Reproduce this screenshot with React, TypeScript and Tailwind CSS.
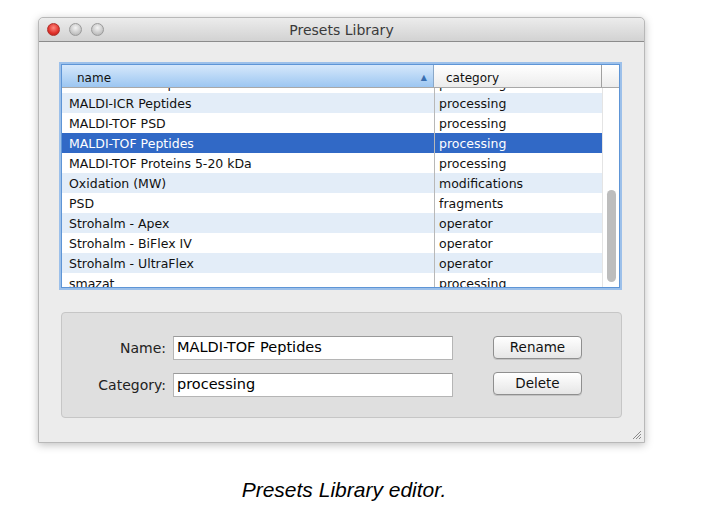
import React from "react";

type Row = { name: string; category: string };

const rows: Row[] = [
  { name: "MALDI-FTICR Peptides", category: "processing" },
  { name: "MALDI-ICR Peptides", category: "processing" },
  { name: "MALDI-TOF PSD", category: "processing" },
  { name: "MALDI-TOF Peptides", category: "processing" },
  { name: "MALDI-TOF Proteins 5-20 kDa", category: "processing" },
  { name: "Oxidation (MW)", category: "modifications" },
  { name: "PSD", category: "fragments" },
  { name: "Strohalm - Apex", category: "operator" },
  { name: "Strohalm - BiFlex IV", category: "operator" },
  { name: "Strohalm - UltraFlex", category: "operator" },
  { name: "smazat", category: "processing" },
];

const SELECTED = 3;

const ui = { fontFamily: '"DejaVu Sans", "Liberation Sans", sans-serif' };

const Light = ({ red }: { red?: boolean }) => (
  <span
    className={`block w-[13px] h-[13px] rounded-full border ${
      red
        ? "border-[#b0302a] bg-[radial-gradient(circle_at_50%_35%,#ff8a80,#e0302a_60%,#a8201a)]"
        : "border-[#9a9a9a] bg-[radial-gradient(circle_at_50%_35%,#f4f4f4,#c8c8c8_60%,#a8a8a8)]"
    }`}
  />
);

const Field = ({ label, value }: { label: string; value: string }) => (
  <div className="flex items-center h-[24px]">
    <span className="w-[111px] text-right text-[14px] text-[#222] pr-[7px]">{label}</span>
    <div className="w-[280px] h-[24px] bg-white border border-[#b5b5b5] border-t-[#9a9a9a] flex items-center px-[3px] text-[14.5px] text-black">
      {value}
    </div>
  </div>
);

const Btn = ({ label }: { label: string }) => (
  <button className="w-[89px] h-[23px] rounded-[4px] border border-[#8f8f8f] bg-gradient-to-b from-white to-[#e6e6e6] shadow-[0_1px_0_rgba(0,0,0,0.12)] text-[13.5px] text-[#111]">
    {label}
  </button>
);

export default function App() {
  return (
    <div className="w-[726px] h-[523px] bg-white pt-[17px] pl-[38px]" style={ui}>
      {/* window */}
      <div className="w-[607px] h-[426px] rounded-t-[5px] bg-[#ececec] border border-[#b8b8b8] shadow-[0_2px_8px_rgba(0,0,0,0.25)] flex flex-col relative">
        <div className="h-[24px] rounded-t-[5px] bg-gradient-to-b from-[#ececec] to-[#d2d2d2] border-b border-[#8c8c8c] flex items-center relative">
          <div className="flex gap-[9px] pl-[8px]">
            <Light red />
            <Light />
            <Light />
          </div>
          <span className="absolute left-0 right-0 pt-[2px] text-center text-[14px] text-[#3a3a3a] pointer-events-none">
            Presets Library
          </span>
        </div>

        <div className="flex flex-col pl-[22px] pt-[22px]">
          {/* table */}
          <div className="w-[559px] h-[224px] border border-[#5e95d6] shadow-[0_0_0_2px_#9cc0ea] bg-white flex flex-col">
            <div className="h-[23px] flex text-[12px] text-[#111] border-b border-[#a8a8a8]">
              <div className="w-[372px] bg-gradient-to-b from-[#d6e8fb] to-[#9cc6f1] flex items-center pt-[4px] pl-[15px] pr-[6px] border-r border-[#8aa8c8]">
                <span className="flex-1">name</span>
                <span className="text-[8px] text-[#3a6fb0]">▲</span>
              </div>
              <div className="w-[168px] bg-gradient-to-b from-white to-[#ececec] flex items-center pt-[4px] pl-[12px] border-r border-[#a0a0a0]">
                category
              </div>
              <div className="flex-1 bg-gradient-to-b from-white to-[#ececec]" />
            </div>
            <div className="flex-1 flex overflow-hidden">
              <div className="w-[540px] overflow-hidden">
                <div className="-mt-[15px]">
                  {rows.map((r, i) => {
                    const sel = i === SELECTED;
                    const bg = sel ? "bg-[#3169c6] text-white" : i % 2 === 1 ? "bg-[#e3edf8] text-[#111]" : "bg-white text-[#111]";
                    return (
                      <div key={i} className={`h-[20px] flex items-center text-[12.5px] ${bg}`}>
                        <span className="w-[373px] pl-[7px] pt-[3px] border-r border-[#b8b8b8] h-full flex items-center">{r.name}</span>
                        <span className="pl-[4px] pt-[3px]">{r.category}</span>
                      </div>
                    );
                  })}
                </div>
              </div>
              <div className="flex-1 bg-white border-l border-[#e4e4e4] flex flex-col items-center">
                <div className="mt-[102px] w-[9px] h-[92px] rounded-full bg-[#bdbdbd]" />
              </div>
            </div>
          </div>

          {/* edit panel */}
          <div className="mt-[24px] w-[561px] h-[106px] rounded-[4px] bg-[#dfdfdf] border border-[#c6c6c6] flex pt-[23px]">
            <div className="flex flex-col gap-[13px]">
              <Field label="Name:" value="MALDI-TOF Peptides" />
              <Field label="Category:" value="processing" />
            </div>
            <div className="flex flex-col gap-[13px] ml-[40px]">
              <Btn label="Rename" />
              <Btn label="Delete" />
            </div>
          </div>
        </div>

        {/* resize grip */}
        <svg className="absolute right-[2px] bottom-[2px]" width="12" height="12" viewBox="0 0 12 12">
          <path d="M11 3 3 11M11 6 6 11M11 9 9 11" stroke="#8a8a8a" strokeWidth="1" />
        </svg>
      </div>

      <p
        className="w-[688px] text-center mt-[31px] -ml-[38px] text-[21px] italic text-black"
        style={{ fontFamily: '"Liberation Sans", Arial, sans-serif' }}
      >
        Presets Library editor.
      </p>
    </div>
  );
}
